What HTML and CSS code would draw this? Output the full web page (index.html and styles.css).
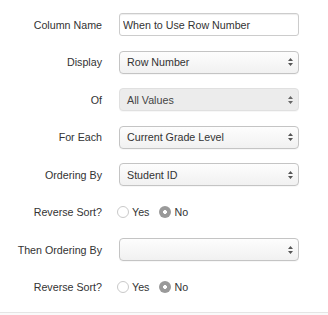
FILE: index.html
```html
<!DOCTYPE html>
<html lang="en">
  <head>
    <meta charset="UTF-8" />
    <meta name="viewport" content="width=device-width, initial-scale=1.0" />
    <title>Column Settings</title>
    <link rel="stylesheet" href="styles.css">
  </head>
  <body>
    <form class="column-form">
      <div class="form-row">
        <label class="control-label">Column Name</label>
        <input class="text-input" type="text" value="When to Use Row Number">
      </div>

      <div class="form-row">
        <label class="control-label">Display</label>
        <div class="select">
          <span>Row Number</span>
          <svg class="caret" width="5" height="8" viewBox="0 0 5 8"><path d="M2.5 0 L5 3 H0 Z M2.5 8 L5 5 H0 Z" fill="#555"/></svg>
        </div>
      </div>

      <div class="form-row">
        <label class="control-label">Of</label>
        <div class="select disabled">
          <span>All Values</span>
          <svg class="caret" width="5" height="8" viewBox="0 0 5 8"><path d="M2.5 0 L5 3 H0 Z M2.5 8 L5 5 H0 Z" fill="#666"/></svg>
        </div>
      </div>

      <div class="form-row">
        <label class="control-label">For Each</label>
        <div class="select">
          <span>Current Grade Level</span>
          <svg class="caret" width="5" height="8" viewBox="0 0 5 8"><path d="M2.5 0 L5 3 H0 Z M2.5 8 L5 5 H0 Z" fill="#555"/></svg>
        </div>
      </div>

      <div class="form-row">
        <label class="control-label">Ordering By</label>
        <div class="select">
          <span>Student ID</span>
          <svg class="caret" width="5" height="8" viewBox="0 0 5 8"><path d="M2.5 0 L5 3 H0 Z M2.5 8 L5 5 H0 Z" fill="#555"/></svg>
        </div>
      </div>

      <div class="form-row">
        <label class="control-label">Reverse Sort?</label>
        <div class="radio-group">
          <span class="radio"></span><span class="radio-text">Yes</span>
          <span class="radio checked"></span><span class="radio-text">No</span>
        </div>
      </div>

      <div class="form-row">
        <label class="control-label">Then Ordering By</label>
        <div class="select">
          <span></span>
          <svg class="caret" width="5" height="8" viewBox="0 0 5 8"><path d="M2.5 0 L5 3 H0 Z M2.5 8 L5 5 H0 Z" fill="#555"/></svg>
        </div>
      </div>

      <div class="form-row">
        <label class="control-label">Reverse Sort?</label>
        <div class="radio-group">
          <span class="radio"></span><span class="radio-text">Yes</span>
          <span class="radio checked"></span><span class="radio-text">No</span>
        </div>
      </div>
    </form>
    <footer class="form-footer"></footer>
  </body>
</html>
```

FILE: styles.css
```css
body {
  font-family: "Liberation Sans", Arial, sans-serif;
  font-size: 10.7px;
  color: #333;
  margin: 0;
  padding: 0;
  background-color: white;
}

.column-form {
  padding-top: 13px;
}

.form-row {
  display: grid;
  grid-template-columns: 102px 180px;
  column-gap: 17px;
  align-items: center;
  height: 23px;
  margin-bottom: 14.5px;
}

.control-label {
  text-align: right;
  white-space: nowrap;
}

.text-input {
  box-sizing: border-box;
  height: 23px;
  width: 180px;
  margin: 0;
  padding: 0 3px;
  border: 1px solid #ccc;
  border-radius: 3px;
  box-shadow: inset 0 1px 1px rgba(0, 0, 0, 0.075);
  font-family: inherit;
  font-size: 10.7px;
  color: #333;
  outline: none;
}

.select {
  box-sizing: border-box;
  height: 23px;
  display: flex;
  align-items: center;
  justify-content: space-between;
  padding: 0 5px 0 7px;
  border: 1px solid #c4c4c4;
  border-radius: 4px;
  background: linear-gradient(#fdfdfd, #f1f1f1);
  box-shadow: 0 1px 0 rgba(0, 0, 0, 0.03);
  color: #333;
}

.select.disabled {
  background: #ececec;
  border-color: #e0e0e0;
  color: #444;
}

.caret {
  display: block;
}

.radio-group {
  display: flex;
  align-items: center;
  margin-left: -2px;
}

.radio {
  box-sizing: border-box;
  width: 12px;
  height: 12px;
  border: 1px solid #c9c9c9;
  border-radius: 50%;
  background: white;
}

.radio.checked {
  border: none;
  background: radial-gradient(circle, white 0 1.6px, #9a9a9a 2.2px);
}

.radio-text {
  margin-left: 3px;
  margin-right: 10px;
}

.form-footer {
  border-top: 1px solid #e5e5e5;
  background: #fafafa;
  height: 6px;
  margin-top: -1px;
}
```
